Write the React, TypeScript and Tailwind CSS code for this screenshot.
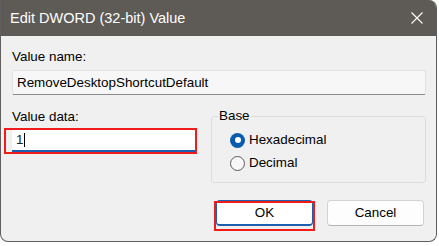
import React from 'react';

const font = { fontFamily: '"Liberation Sans", Arial, sans-serif' };

const Radio: React.FC<{ checked?: boolean; label: string }> = ({ checked, label }) => (
  <div className="flex items-center h-[20px] gap-[4px]">
    {checked ? (
      <span className="w-[15px] h-[15px] rounded-full bg-[#0b5cad] flex items-center justify-center">
        <span className="w-[6px] h-[6px] rounded-full bg-white" />
      </span>
    ) : (
      <span className="w-[15px] h-[15px] rounded-full border border-[#5c5c5c] bg-[#f7f7f7]" />
    )}
    <span>{label}</span>
  </div>
);

export default function App() {
  return (
    <div className="w-[439px] h-[246px] bg-white overflow-hidden text-[13.4px] leading-[16px] text-black" style={font}>
      <div className="w-[437px] h-[242px] bg-[#f0f0f0] rounded-tr-[8px] rounded-br-[8px] rounded-bl-[8px] border-r border-b border-l border-[#5f5f5f] overflow-hidden flex flex-col">
        {/* title bar */}
        <div className="h-[36px] bg-[#5e5a56] flex items-center justify-between pl-[9px] pr-[13px] shrink-0">
          <span className="text-white text-[14.5px]">Edit DWORD (32-bit) Value</span>
          <svg width="12" height="12" viewBox="0 0 12 12">
            <path d="M0.5 0.5 L11.5 11.5 M11.5 0.5 L0.5 11.5" stroke="#ffffff" strokeWidth="1.1" />
          </svg>
        </div>

        <div className="pl-[11px] pr-[10px] pt-[13px] flex flex-col">
          <div>Value name:</div>
          <div className="mt-[5px] h-[25px] bg-[#f7f7f7] border border-[#e2e2e2] border-b-[#8a8a8a] rounded-[2px] pl-[4px] flex items-center">
            RemoveDesktopShortcutDefault
          </div>

          <div className="mt-[13px] flex items-start">
            <div className="w-[183px] mt-[1px] flex flex-col">
              <div>Value data:</div>
              <div className="relative mt-[5px]">
                <div className="h-[22px] bg-white border-b-2 border-[#1d5fae] pl-[4px] flex items-center">
                  <span className="text-[#222]">1</span>
                  <span className="ml-[1px] w-[1px] h-[14px] bg-black" />
                </div>
                <div className="absolute -left-[8px] -right-[2px] -top-[2px] -bottom-[2px] border-2 border-[#f01c1c]" />
              </div>
            </div>

            <fieldset className="ml-[16px] w-[215px] h-[75px] border border-[#dcdcdc] rounded-[3px] px-0 pt-[6px] pb-0 m-0">
              <legend className="ml-[6px] px-[1px]">Base</legend>
              <div className="pl-[18px] flex flex-col gap-[3px]">
                <Radio checked label="Hexadecimal" />
                <Radio label="Decimal" />
              </div>
            </fieldset>
          </div>

          <div className="mt-[17px] flex justify-end gap-[14px] mr-[2px]">
            <div className="relative">
              <button className="w-[97px] h-[26px] bg-white border border-[#1d5fae] border-b-2 rounded-[4px] leading-[16px]" style={font}>
                OK
              </button>
              <div className="absolute -left-[2px] -right-[2px] top-[1px] -bottom-[5px] border-2 border-[#f01c1c]" />
            </div>
            <button className="w-[97px] h-[26px] bg-[#fdfdfd] border border-[#d3d3d3] border-b-[#b5b5b5] rounded-[4px] leading-[16px]" style={font}>
              Cancel
            </button>
          </div>
        </div>
      </div>
    </div>
  );
}
